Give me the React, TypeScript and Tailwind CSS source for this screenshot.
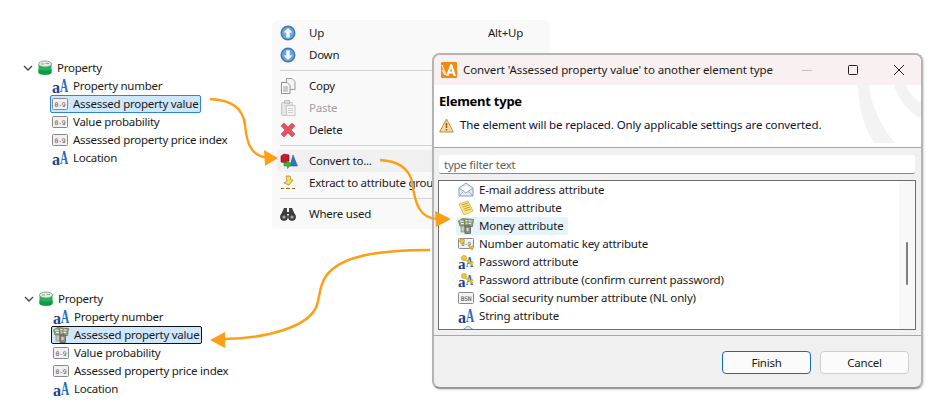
import { ReactNode } from "react";

const FONT = "font-['Noto_Sans','Open_Sans',sans-serif]";

function AttrIcon() {
  return (
    <svg width="16" height="16" viewBox="0 0 16 16" className="shrink-0 overflow-visible">
      <text x="0" y="15" fontFamily="Liberation Serif" fontWeight="700" fontSize="16" fill="#1c3f94">a</text>
      <text x="8" y="13.5" fontFamily="Liberation Serif" fontWeight="700" fontSize="18" textLength="8" lengthAdjust="spacingAndGlyphs" fill="#2468c8">A</text>
    </svg>
  );
}

function NumIcon() {
  return (
    <svg width="16" height="16" viewBox="0 0 16 16" className="shrink-0 overflow-visible">
      <rect x="0.5" y="2.5" width="15" height="11" rx="1" fill="#f0f0f0" stroke="#8a8a8a" />
      <text x="8" y="10.5" textAnchor="middle" fontFamily="DejaVu Sans Mono" fontSize="6.4" fill="#555">0-9</text>
    </svg>
  );
}

function MoneyIcon() {
  return (
    <svg width="16" height="16" viewBox="0 0 16 16" className="shrink-0">
      <path d="M0.5 3 L4.5 0.5 L15.5 1.5 L14.5 8.5 L2 8 Z" fill="#97a583" stroke="#5f6a52" strokeWidth="0.7" />
      <path d="M2 3 L6 3.5 M7.5 2.5 L13.5 3 M3 5.5 L6 5.7 M8 5 L13 5.5" stroke="#f1f2e6" strokeWidth="1.2" />
      <path d="M6 1 L6.5 8 M10 1.5 L10 8" stroke="#5f6a52" strokeWidth="0.7" />
      <rect x="3" y="8" width="4" height="6" fill="#c9c8ae" stroke="#7c7c6a" strokeWidth="0.6" />
      <rect x="7" y="8" width="5.5" height="7.5" fill="#8d8d86" stroke="#4f4f49" strokeWidth="0.7" />
      <rect x="8.5" y="10" width="2" height="3" fill="#d9d9d2" />
    </svg>
  );
}

function PackageIcon() {
  return (
    <svg width="16" height="16" viewBox="0 0 16 16" className="shrink-0">
      <path d="M1.5 4.5 V12.5 C1.5 15.5 14.5 15.5 14.5 12.5 V4.5 Z" fill="#20b45c" />
      <path d="M1.5 9 C4 11 12 11 14.5 9 V12.5 C14.5 15.5 1.5 15.5 1.5 12.5 Z" fill="#0f9a47" />
      <ellipse cx="8" cy="4" rx="6.5" ry="3" fill="#e3efe4" stroke="#74907a" strokeWidth="0.8" />
      <path d="M4 4 H7 M8.5 3.5 H12" stroke="#8fa593" strokeWidth="1" />
    </svg>
  );
}

function Chevron() {
  return (
    <svg width="10" height="6" viewBox="0 0 10 6" className="shrink-0">
      <path d="M1 1 L5 5 L9 1" fill="none" stroke="#444" strokeWidth="1.3" />
    </svg>
  );
}

function TreeRow({ icon, label, selected }: { icon: ReactNode; label: string; selected?: "focus" | "dark" }) {
  const box =
    selected === "focus"
      ? "border-[#2a86d8] bg-[#cfe7fb]"
      : selected === "dark"
        ? "border-[#111111] bg-[#cfe7fb]"
        : "border-transparent";
  return (
    <div className={`flex h-[18px] w-fit items-center gap-[5px] rounded-[2px] border pl-[1px] pr-[2px] ${box}`}>
      {icon}
      <span className="whitespace-nowrap">{label}</span>
    </div>
  );
}

function PropertyTree({ icon, selected, className }: { icon: ReactNode; selected: "focus" | "dark"; className: string }) {
  return (
    <div className={`absolute text-[#1a1a1a] ${className}`}>
      <div className="flex h-[18px] items-center">
        <Chevron />
        <span className="ml-[4px] mr-[4px]"><PackageIcon /></span>
        <span>Property</span>
      </div>
      <div className="ml-[27px]">
        <TreeRow icon={<AttrIcon />} label="Property number" />
        <TreeRow icon={icon} label="Assessed property value" selected={selected} />
        <TreeRow icon={<NumIcon />} label="Value probability" />
        <TreeRow icon={<NumIcon />} label="Assessed property price index" />
        <TreeRow icon={<AttrIcon />} label="Location" />
      </div>
    </div>
  );
}

function RoundArrow({ up }: { up?: boolean }) {
  return (
    <svg width="16" height="16" viewBox="0 0 16 16">
      <circle cx="8" cy="8" r="7.5" fill="#3f78b4" />
      <circle cx="8" cy="8" r="6" fill="#6ea6dc" />
      <g transform={up ? undefined : "rotate(180 8 8)"}>
        <path d="M8 3 L12.4 7.6 H9.7 V12.6 H6.3 V7.6 H3.6 Z" fill="#ffffff" />
      </g>
    </svg>
  );
}

function CopyIcon() {
  return (
    <svg width="16" height="16" viewBox="0 0 16 16">
      <path d="M6.5 0.5 H12 L15 3.5 V11.5 H6.5 Z" fill="#f4f4f4" stroke="#9a9a9a" />
      <path d="M1.5 4.5 H7 L10 7.5 V15.5 H1.5 Z" fill="#ffffff" stroke="#8f8f8f" />
      <path d="M3 9 H8 M3 11 H8 M3 13 H8" stroke="#9a9a9a" />
    </svg>
  );
}

function PasteIcon() {
  return (
    <svg width="16" height="16" viewBox="0 0 16 16">
      <rect x="1.5" y="2.5" width="11" height="13" rx="1" fill="#e4e4e4" stroke="#c4c4c4" />
      <rect x="4.5" y="0.5" width="5" height="3" fill="#dadada" stroke="#c4c4c4" />
      <rect x="6.5" y="5.5" width="8.5" height="10" fill="#f5f5f5" stroke="#c8c8c8" />
      <path d="M8 8.5 H13 M8 10.5 H13 M8 12.5 H13" stroke="#d0d0d0" />
    </svg>
  );
}

function DeleteIcon() {
  return (
    <svg width="16" height="16" viewBox="0 0 16 16">
      <path d="M1 4 L4 1 L8 5 L12 1 L15 4 L11 8 L15 12 L12 15 L8 11 L4 15 L1 12 L5 8 Z" fill="#e25560" stroke="#c8404c" strokeWidth="0.6" />
    </svg>
  );
}

function ConvertIcon() {
  return (
    <svg width="18" height="16" viewBox="0 0 18 16">
      <path d="M13 2 L17.5 13 H10 Z" fill="#2e78c4" stroke="#1c4f8f" strokeWidth="0.5" />
      <path d="M1 3 L4 1 L9 2 L9 8 L6 10 L1 9 Z" fill="#c9182b" stroke="#7c0f1c" strokeWidth="0.6" />
      <path d="M4 9.5 H7 V7.5 L11.5 11 L7.5 15.5 V13 H4 Z" fill="#3cb53f" stroke="#1f7c25" strokeWidth="0.5" />
    </svg>
  );
}

function ExtractIcon() {
  return (
    <svg width="16" height="16" viewBox="0 0 16 16">
      <path d="M6 1 L10 1 L11 5 L13 5 L9 10 L4 8 L7 6 Z" fill="#f6dc6a" stroke="#b68a1c" strokeWidth="0.8" />
      <path d="M1 13.5 H4 M6 13.5 H10 M12 13.5 H15" stroke="#8a6a12" strokeWidth="1" />
    </svg>
  );
}

function BinocularsIcon() {
  return (
    <svg width="16" height="16" viewBox="0 0 16 16">
      <path d="M4 2 H7 V6 H9 V2 H12 L15.5 10 H9.5 V8 H6.5 V10 H0.5 Z" fill="#3f3f3f" />
      <circle cx="4" cy="11" r="3.6" fill="#444" stroke="#222" strokeWidth="0.6" />
      <circle cx="12" cy="11" r="3.6" fill="#444" stroke="#222" strokeWidth="0.6" />
      <circle cx="4" cy="11" r="1.6" fill="#9aa4ad" />
      <circle cx="12" cy="11" r="1.6" fill="#9aa4ad" />
    </svg>
  );
}

function MenuItem({ icon, label, shortcut, disabled, active }: { icon: ReactNode; label: string; shortcut?: string; disabled?: boolean; active?: boolean }) {
  return (
    <div className={`flex h-[22px] items-center rounded-[4px] ${active ? "bg-[#f0f0f0]" : ""} ${disabled ? "text-[#a0a0a0]" : "text-[#1a1a1a]"}`}>
      <span className="flex w-[32px] shrink-0 justify-start pl-[3px]">{icon}</span>
      <span className="whitespace-nowrap">{label}</span>
      {shortcut && <span className="ml-auto pr-[22px]">{shortcut}</span>}
    </div>
  );
}

function MenuSep() {
  return <div className="my-[4px] ml-[3px] h-px bg-[#d4d4d4]" />;
}

function MailIcon() {
  return (
    <svg width="16" height="16" viewBox="0 0 16 16" className="shrink-0">
      <path d="M1 6 L8 1 L15 6 V14 H1 Z" fill="#e3ebf6" stroke="#8a9cc0" />
      <path d="M3 7 L8 3.5 L13 7 L8 10 Z" fill="#ffffff" />
      <path d="M1 14 L6 9 M15 14 L10 9 M1 6 L8 11 L15 6" fill="none" stroke="#98a9ca" />
    </svg>
  );
}

function MemoIcon() {
  return (
    <svg width="16" height="16" viewBox="0 0 16 16" className="shrink-0">
      <path d="M1 4 L10 1 L15 11 L6 15 Z" fill="#fbe98a" stroke="#d2b13c" strokeWidth="0.8" />
      <path d="M3.5 5 L10 3 M4.5 7 L11 5 M5.5 9 L12 7 M6.5 11 L13 9" stroke="#c6a02e" />
    </svg>
  );
}

function NumKeyIcon() {
  return (
    <svg width="16" height="16" viewBox="0 0 16 16" className="shrink-0 overflow-visible">
      <rect x="0.5" y="2.5" width="15" height="10" rx="1" fill="#f2f2f2" stroke="#8a8a8a" />
      <text x="8" y="10" textAnchor="middle" fontFamily="DejaVu Sans Mono" fontSize="5.6" fill="#555">0-9</text>
      <circle cx="4" cy="5" r="2.4" fill="#f0c53a" stroke="#a9851c" strokeWidth="0.6" />
      <path d="M10 9 L14.5 14 M12.5 12 L15 10" stroke="#e0ac22" strokeWidth="1.8" />
    </svg>
  );
}

function PasswordIcon() {
  return (
    <svg width="16" height="16" viewBox="0 0 16 16" className="shrink-0 overflow-visible">
      <text x="0" y="15" fontFamily="Liberation Serif" fontWeight="700" fontSize="15" fill="#1c3f94">a</text>
      <text x="8" y="13" fontFamily="Liberation Serif" fontWeight="700" fontSize="14" textLength="7" lengthAdjust="spacingAndGlyphs" fill="#2468c8">A</text>
      <circle cx="6" cy="4" r="2.6" fill="#f2c832" stroke="#b48d18" strokeWidth="0.5" />
      <path d="M8 6 L14.5 11 M12.5 9.5 L15 7.5" stroke="#e9b820" strokeWidth="2" />
    </svg>
  );
}

function BsnIcon() {
  return (
    <svg width="16" height="16" viewBox="0 0 16 16" className="shrink-0 overflow-visible">
      <rect x="0.5" y="2.5" width="15" height="11" rx="1" fill="#f4f4f4" stroke="#8a8a8a" />
      <text x="8" y="10.5" textAnchor="middle" fontFamily="DejaVu Sans Mono" fontSize="6.2" fill="#444">BSN</text>
    </svg>
  );
}

function ListRow({ icon, label, active }: { icon: ReactNode; label: string; active?: boolean }) {
  return (
    <div className={`flex h-[18px] w-fit items-center gap-[5px] rounded-[2px] pl-[2px] pr-[4px] ${active ? "bg-[#e5f3fb]" : ""}`}>
      {icon}
      <span className="whitespace-nowrap">{label}</span>
    </div>
  );
}

function Logo() {
  return (
    <svg width="16" height="16" viewBox="0 0 16 16" className="shrink-0">
      <rect width="16" height="16" rx="1" fill="#f08a12" />
      <path d="M1 3 L5 13 M1 8 L4 13" stroke="#ffe2b8" strokeWidth="1.4" />
      <path d="M5 14 L9.5 2 H11 L15 14 H12.6 L11.8 11.4 H8.4 L7.4 14 Z M9 9.4 H11.2 L10.2 6 Z" fill="#ffffff" fillRule="evenodd" />
    </svg>
  );
}

function Dialog() {
  return (
    <div className="absolute left-[432px] top-[53px] flex h-[336px] w-[491px] flex-col overflow-hidden rounded-[8px] border-2 border-[#b4b4b4] border-b-[#9a9a9a] bg-[#f0f0f0] shadow-[1px_1px_2px_rgba(0,0,0,0.15)]">
      <div className="flex h-[30px] shrink-0 items-center bg-[#f9f0f1] pl-[7px] text-[#1a1a1a]">
        <Logo />
        <span className="ml-[6px] whitespace-nowrap tracking-[-0.09px]">Convert 'Assessed property value' to another element type</span>
        <div className="ml-auto flex items-center">
          <svg width="12" height="12" viewBox="0 0 12 12" className="mr-[34px]"><path d="M1 6.5 H11" stroke="#c2c2c2" /></svg>
          <svg width="12" height="12" viewBox="0 0 12 12" className="mr-[34px]"><rect x="1.5" y="1.5" width="9" height="9" rx="1" fill="none" stroke="#222" /></svg>
          <svg width="12" height="12" viewBox="0 0 12 12" className="mr-[16px]"><path d="M1 1 L11 11 M11 1 L1 11" stroke="#222" /></svg>
        </div>
      </div>
      <div className="relative h-[63px] shrink-0 border-b border-[#a8a8a8] bg-white px-[5px]">
        <svg width="63" height="58" viewBox="0 0 63 58" className="absolute right-0 top-0">
          <path d="M0 0 H11 C13 22 24 42 37 58 H16 C6 42 0 22 0 0 Z M36 0 H48 C51 8 57 14 63 18 V34 C50 26 40 14 36 0 Z" fill="#f3f3f3" />
        </svg>
        <div className="relative pt-[7px] text-[13px] font-bold leading-[18px] text-black">Element type</div>
        <div className="relative mt-[6px] flex h-[18px] items-center text-[#101030]">
          <svg width="15" height="15" viewBox="0 0 15 15" className="shrink-0">
            <path d="M7.5 1 L14.3 14 H0.7 Z" fill="#f6d9a0" stroke="#c08a3c" strokeLinejoin="round" />
            <path d="M7.5 5 V10 M7.5 11 V12.6" stroke="#8a5a1c" strokeWidth="1.4" />
          </svg>
          <span className="ml-[6px] whitespace-nowrap tracking-[-0.13px]">The element will be replaced. Only applicable settings are converted.</span>
        </div>
      </div>
      <div className="flex min-h-0 flex-1 flex-col pl-[4px] pr-[5px]">
        <div className="mx-[1px] mt-[7px] flex h-[19px] shrink-0 items-center rounded-[2px] border-b border-[#8a8a8a] bg-white pl-[5px] pt-[1px] text-[#5f5f5f]">
          type filter text
        </div>
        <div className="mt-[6px] flex h-[150px] shrink-0 overflow-hidden border border-[#6e6e6e] bg-white">
          <div className="flex-1 overflow-hidden pl-[17px] tracking-[-0.16px] text-[#1a1a1a]">
            <ListRow icon={<MailIcon />} label="E-mail address attribute" />
            <ListRow icon={<MemoIcon />} label="Memo attribute" />
            <ListRow icon={<MoneyIcon />} label="Money attribute" active />
            <ListRow icon={<NumKeyIcon />} label="Number automatic key attribute" />
            <ListRow icon={<PasswordIcon />} label="Password attribute" />
            <ListRow icon={<PasswordIcon />} label="Password attribute (confirm current password)" />
            <ListRow icon={<BsnIcon />} label="Social security number attribute (NL only)" />
            <ListRow icon={<AttrIcon />} label="String attribute" />
            <div className="h-[18px] pl-[4px]"><MailIcon /></div>
          </div>
          <div className="w-[16px] shrink-0 bg-[#f8f8f8] pl-[7px] pt-[61px]">
            <div className="h-[43px] w-[2px] rounded-full bg-[#808080]" />
          </div>
        </div>
      </div>
      <div className="flex h-[52px] shrink-0 items-start justify-end gap-[9px] border-t border-[#a8a8a8] pr-[12px] pt-[15px]">
        <div className="flex h-[23px] w-[89px] items-center justify-center rounded-[4px] border border-[#0f6cbd] bg-[#fbfbfb] text-[#1a1a1a]">Finish</div>
        <div className="flex h-[23px] w-[89px] items-center justify-center rounded-[4px] border border-[#d0d0d0] bg-[#fbfbfb] text-[#1a1a1a]">Cancel</div>
      </div>
    </div>
  );
}

function Arrows() {
  const orange = "#ff9e16";
  return (
    <svg width="945" height="418" viewBox="0 0 945 418" className="pointer-events-none absolute left-0 top-0">
      <g fill="none" stroke={orange} strokeWidth="2.4">
        <path d="M210 99 C232 100 243 108 245 125 C247 146 252 156 268 158" />
        <path d="M380 160 C398 161 409 168 412 182 C415 204 420 219 438 219" />
        <path d="M430 250 C378 250 340 256 326 276 C319 286 320 296 317 305 C310 326 270 338 224 339" />
      </g>
      <g fill={orange}>
        <path d="M278 158 L264 150 L265 166 Z" />
        <path d="M451 219 L435 211 L436 227 Z" />
        <path d="M210 340 L225 332 L225 348 Z" />
      </g>
    </svg>
  );
}

export default function App() {
  return (
    <div className={`relative h-[418px] w-[945px] overflow-hidden bg-white text-[11.5px] leading-[18px] tracking-[-0.25px] ${FONT}`}>
      <PropertyTree className="left-[23px] top-[59px]" icon={<NumIcon />} selected="focus" />
      <PropertyTree className="left-[24px] top-[290px]" icon={<MoneyIcon />} selected="dark" />
      <div className="absolute left-[272px] top-[20px] h-[209px] w-[278px] rounded-[6px] bg-[#f9f9f9] px-[5px] pt-[2px]">
        <MenuItem icon={<RoundArrow up />} label="Up" shortcut="Alt+Up" />
        <MenuItem icon={<RoundArrow />} label="Down" />
        <MenuSep />
        <MenuItem icon={<CopyIcon />} label="Copy" />
        <MenuItem icon={<PasteIcon />} label="Paste" disabled />
        <MenuItem icon={<DeleteIcon />} label="Delete" />
        <MenuSep />
        <MenuItem icon={<ConvertIcon />} label="Convert to..." active />
        <MenuItem icon={<ExtractIcon />} label="Extract to attribute group" />
        <MenuSep />
        <MenuItem icon={<BinocularsIcon />} label="Where used" />
      </div>
      <Dialog />
      <Arrows />
    </div>
  );
}
